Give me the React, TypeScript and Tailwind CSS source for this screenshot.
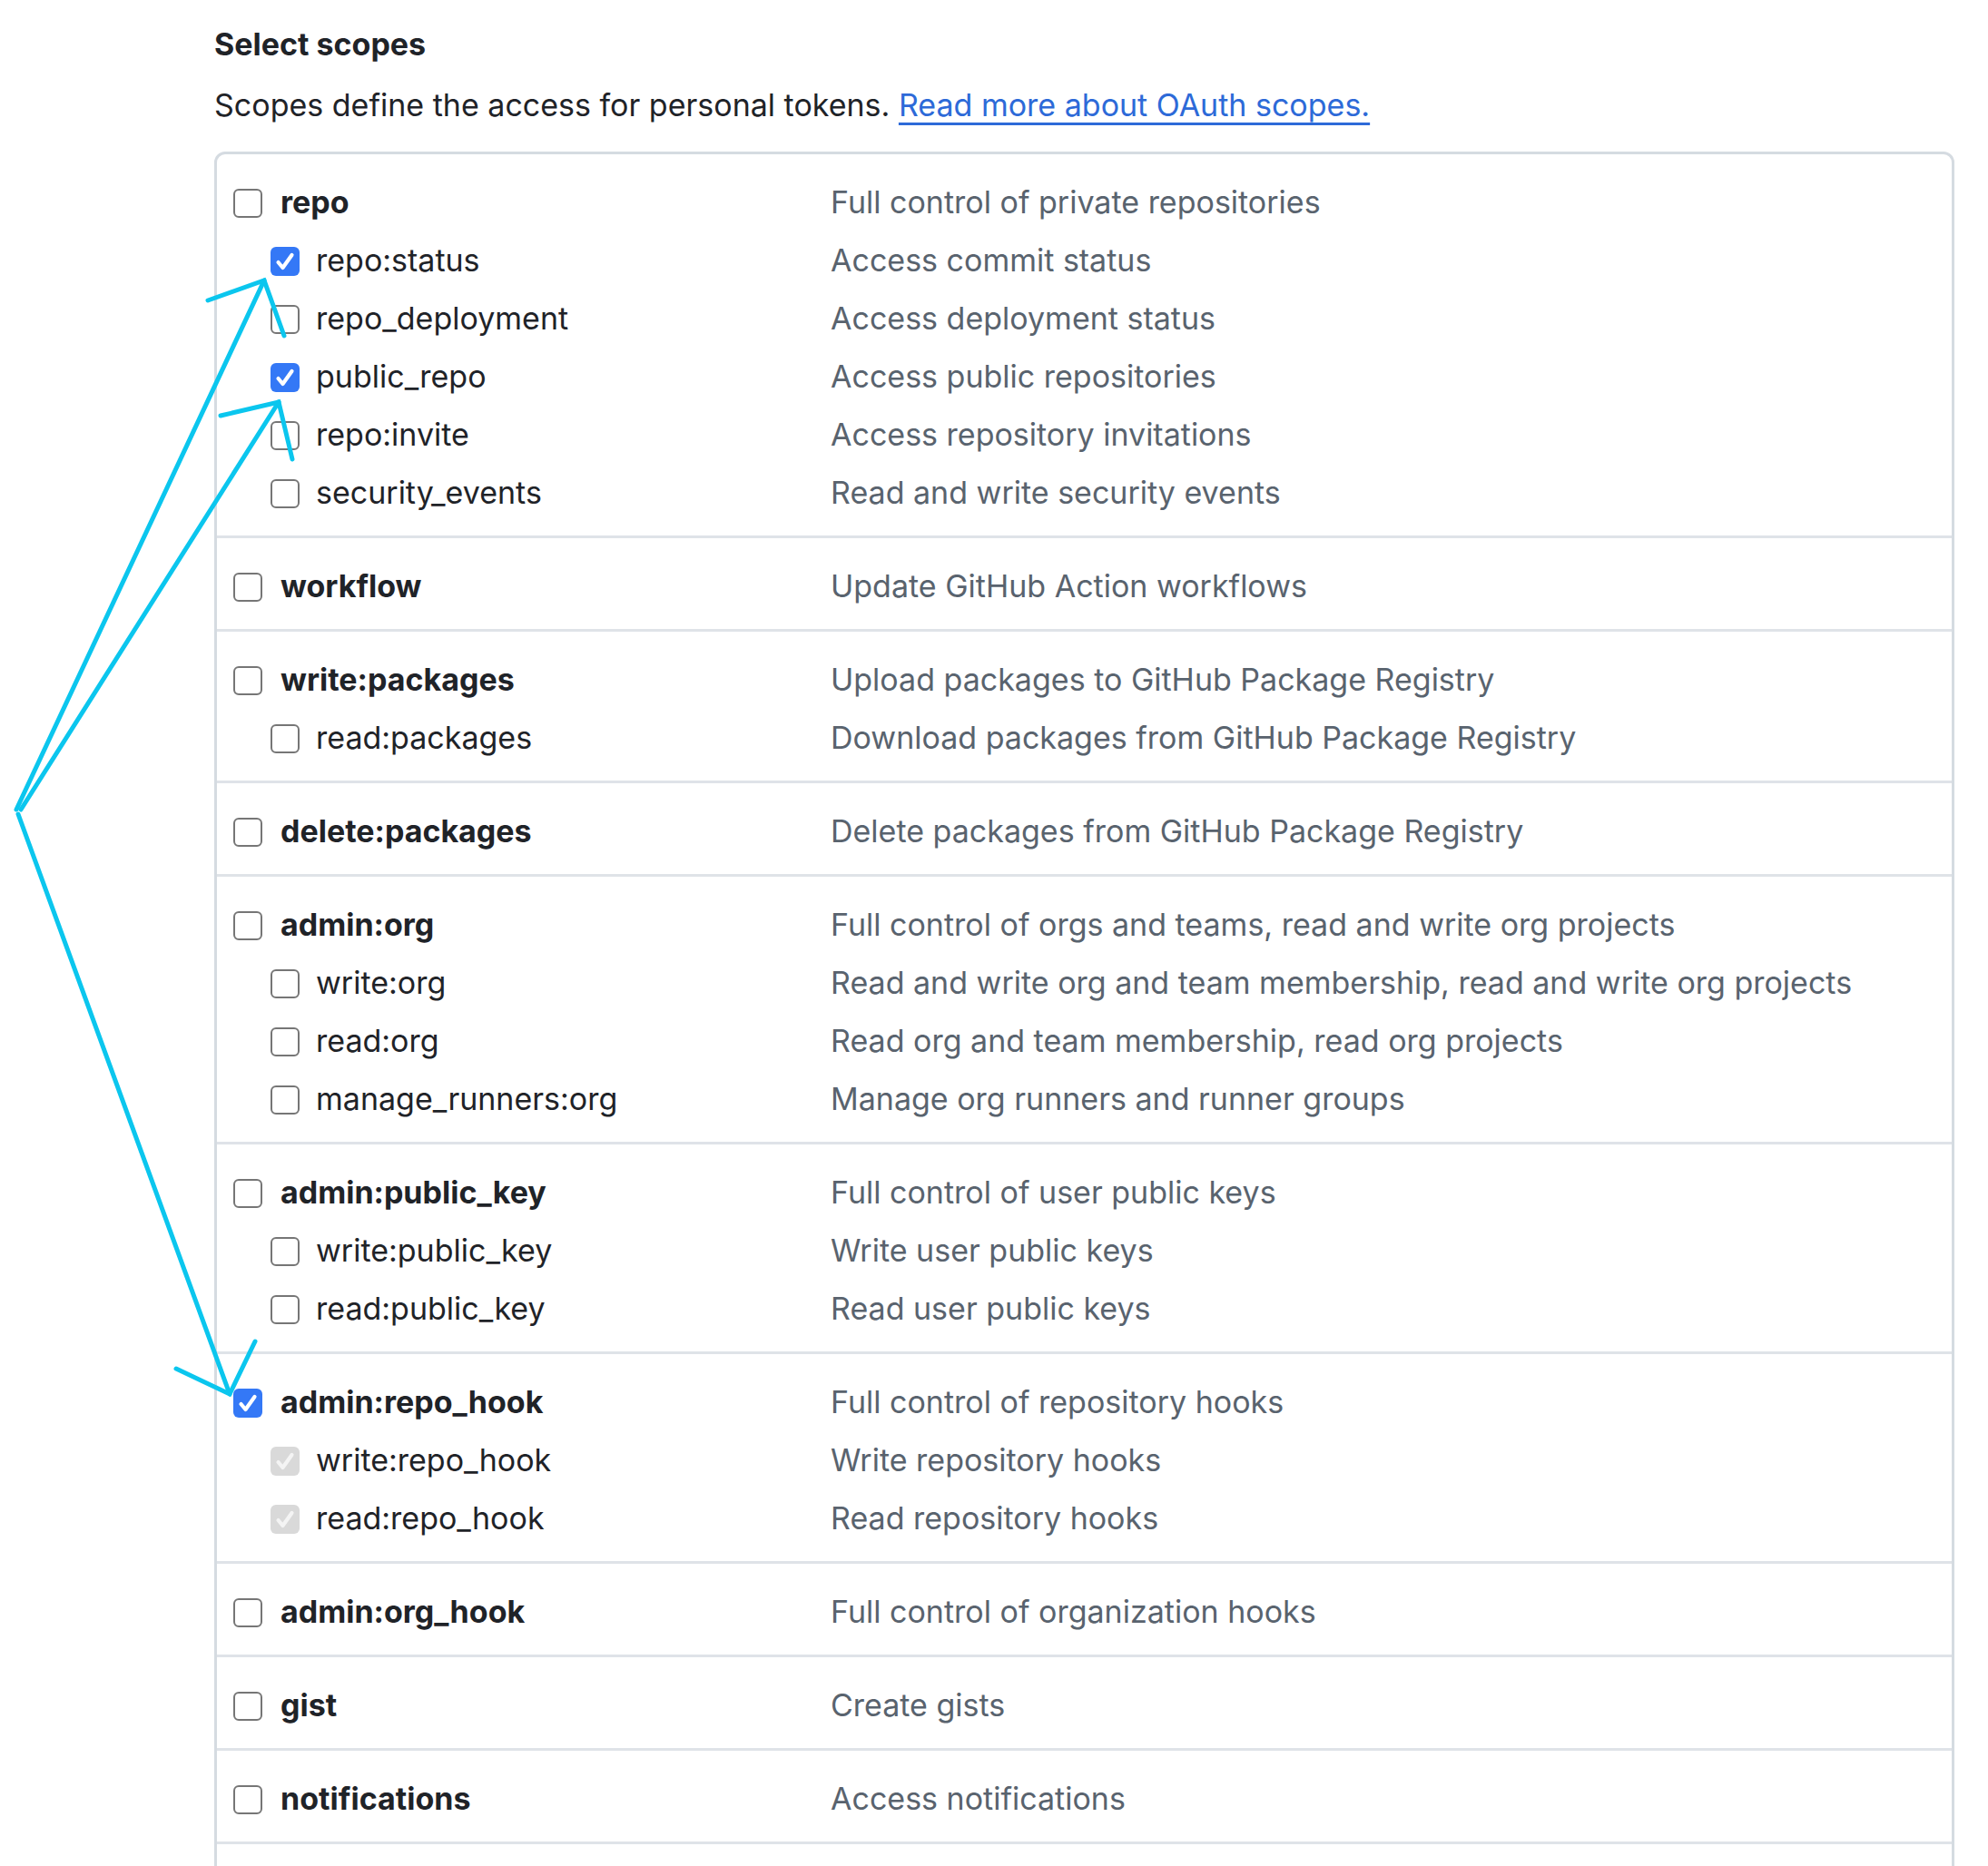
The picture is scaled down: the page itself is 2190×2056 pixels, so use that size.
import React from "react";

type Row = { name: string; desc: string; checked?: boolean; disabled?: boolean };

const groups: Row[][] = [
  [
    { name: "repo", desc: "Full control of private repositories" },
    { name: "repo:status", desc: "Access commit status", checked: true },
    { name: "repo_deployment", desc: "Access deployment status" },
    { name: "public_repo", desc: "Access public repositories", checked: true },
    { name: "repo:invite", desc: "Access repository invitations" },
    { name: "security_events", desc: "Read and write security events" },
  ],
  [{ name: "workflow", desc: "Update GitHub Action workflows" }],
  [
    { name: "write:packages", desc: "Upload packages to GitHub Package Registry" },
    { name: "read:packages", desc: "Download packages from GitHub Package Registry" },
  ],
  [{ name: "delete:packages", desc: "Delete packages from GitHub Package Registry" }],
  [
    { name: "admin:org", desc: "Full control of orgs and teams, read and write org projects" },
    { name: "write:org", desc: "Read and write org and team membership, read and write org projects" },
    { name: "read:org", desc: "Read org and team membership, read org projects" },
    { name: "manage_runners:org", desc: "Manage org runners and runner groups" },
  ],
  [
    { name: "admin:public_key", desc: "Full control of user public keys" },
    { name: "write:public_key", desc: "Write user public keys" },
    { name: "read:public_key", desc: "Read user public keys" },
  ],
  [
    { name: "admin:repo_hook", desc: "Full control of repository hooks", checked: true },
    { name: "write:repo_hook", desc: "Write repository hooks", checked: true, disabled: true },
    { name: "read:repo_hook", desc: "Read repository hooks", checked: true, disabled: true },
  ],
  [{ name: "admin:org_hook", desc: "Full control of organization hooks" }],
  [{ name: "gist", desc: "Create gists" }],
  [{ name: "notifications", desc: "Access notifications" }],
];

function Box({ checked, disabled }: { checked?: boolean; disabled?: boolean }) {
  if (checked && disabled) {
    return (
      <span className="flex h-[32px] w-[32px] shrink-0 items-center justify-center rounded-[6px] bg-[#d9d9d9]">
        <svg viewBox="0 0 32 32" className="h-[32px] w-[32px]">
          <path d="M8.5 17 L13.5 23 L23.5 9" fill="none" stroke="#f4f4f4" strokeWidth="4.2" strokeLinecap="round" strokeLinejoin="round" />
        </svg>
      </span>
    );
  }
  if (checked) {
    return (
      <span className="flex h-[32px] w-[32px] shrink-0 items-center justify-center rounded-[6px] bg-[#3478f6]">
        <svg viewBox="0 0 32 32" className="h-[32px] w-[32px]">
          <path d="M8.5 17 L13.5 23 L23.5 9" fill="none" stroke="#ffffff" strokeWidth="4.2" strokeLinecap="round" strokeLinejoin="round" />
        </svg>
      </span>
    );
  }
  return <span className="block h-[32px] w-[32px] shrink-0 rounded-[6px] border-[2.5px] border-[#767676] bg-white" />;
}

export default function App() {
  return (
    <div className="relative h-[2056px] w-[2190px] overflow-hidden bg-white font-['Inter',sans-serif] text-[#1f2328]">
      <div className="pl-[236px] pt-[27px]">
        <h3 className="text-[34px] font-bold leading-[44px]">Select scopes</h3>
        <p className="mt-[23px] text-[34px] leading-[44px]">
          Scopes define the access for personal tokens.{" "}
          <a className="text-[#2d6ad8] underline decoration-[3px] underline-offset-[7px]" href="#">
            Read more about OAuth scopes.
          </a>
        </p>
        <div className="mt-[29px] w-[1917px] rounded-[12px] border-[3px] border-[#d5dbe1]">
          {groups.map((g, gi) => (
            <div key={gi} className={"pb-[14px] pt-[22px] " + (gi > 0 ? "border-t-[3px] border-[#dfe3e8]" : "")}>
              {g.map((r, ri) => {
                const sub = ri > 0;
                return (
                  <div key={r.name} className="flex h-[64px] items-center">
                    <div className={"flex w-[676px] shrink-0 items-center " + (sub ? "pl-[59px]" : "pl-[18px]")}>
                      <Box checked={r.checked} disabled={r.disabled} />
                      <span className={"-mt-[2px] text-[34px] leading-none " + (sub ? "ml-[18px] font-normal" : "ml-[20px] font-bold")}>
                        {r.name}
                      </span>
                    </div>
                    <span className="-mt-[2px] text-[34px] leading-none text-[#59636e]">{r.desc}</span>
                  </div>
                );
              })}
            </div>
          ))}
          <div className="h-[100px] border-t-[3px] border-[#dfe3e8]" />
        </div>
      </div>
      <svg className="pointer-events-none absolute left-0 top-0" width="2190" height="2056" viewBox="0 0 2190 2056">
        <g fill="none" stroke="#0bc6ee" strokeWidth="5" strokeLinecap="round" strokeLinejoin="miter">
          <path d="M18 892 L291 309" />
          <path d="M229 331 L291 309 L313 370" />
          <path d="M23 892 L307 443" />
          <path d="M243 458 L307 443 L322 506" />
          <path d="M20 897 L253 1536" />
          <path d="M194 1508 L253 1536 L281 1478" />
        </g>
      </svg>
    </div>
  );
}
